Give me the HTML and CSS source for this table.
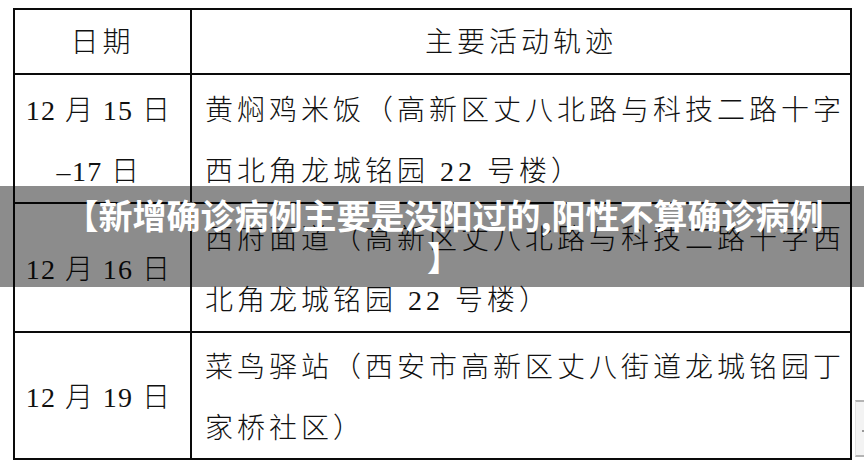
FILE: index.html
```html
<!DOCTYPE html>
<html lang="zh-CN">
<head>
<meta charset="utf-8">
<title>主要活动轨迹</title>
<link rel="stylesheet" href="styles.css">
</head>
<body>
<div class="page">
  <div class="grid">
    <div class="cell head">日期</div>
    <div class="cell head">主要活动轨迹</div>

    <div class="cell date two"><span>12 月 15 日</span><span>–17 日</span></div>
    <div class="cell place">黄焖鸡米饭（高新区丈八北路与科技二路十字西北角龙城铭园 22 号楼）</div>

    <div class="cell date">12 月 16 日</div>
    <div class="cell place">西府面道（高新区丈八北路与科技二路十字西北角龙城铭园 22 号楼）</div>

    <div class="cell date">12 月 19 日</div>
    <div class="cell place">菜鸟驿站（西安市高新区丈八街道龙城铭园丁家桥社区）</div>
  </div>
</div>
<div class="band">【新增确诊病例主要是没阳过的,阳性不算确诊病例<br>】</div>
<div class="side-tab"><span class="dot"></span></div>
</body>
</html>
```
FILE: styles.css
```css
html, body {
  margin: 0;
  padding: 0;
  background: #ffffff;
}
body {
  width: 864px;
  height: 470px;
  overflow: hidden;
  position: relative;
  font-family: "Liberation Serif", "Noto Sans CJK SC", serif;
  color: #111;
}
.page {
  padding: 8px 0 0 13px;
}
.grid {
  width: 839px;
  box-sizing: border-box;
  display: grid;
  grid-template-columns: 175px 658px;
  grid-template-rows: 63px 127px 127px 125px;
  gap: 2px;
  padding: 2px;
  background: #0a0a0a;
}
.cell {
  background: #fff;
  font-size: 28px;
  letter-spacing: 4px;
  line-height: 61px;
  font-weight: 300;
}
.head {
  display: flex;
  align-items: center;
  justify-content: center;
  padding-top: 2px;
}
.date {
  display: flex;
  flex-direction: column;
  align-items: center;
  justify-content: center;
  padding-right: 8px;
  padding-top: 4px;
  white-space: nowrap;
  letter-spacing: 1.4px;
}
.place {
  display: flex;
  align-items: center;
  padding: 4px 0 0 13px;
  box-sizing: border-box;
}
.band {
  position: absolute;
  left: 0;
  top: 186px;
  width: 864px;
  height: 101px;
  box-sizing: border-box;
  padding: 8px 24px 0 48px;
  background: rgba(0, 0, 0, 0.45);
  color: #fff;
  font-family: "Noto Sans CJK SC", sans-serif;
  font-weight: 700;
  font-size: 34px;
  line-height: 42px;
  text-align: center;
}
.side-tab {
  position: absolute;
  left: 855px;
  top: 400px;
  width: 14px;
  height: 57px;
  box-sizing: border-box;
  background: #f3f3f3;
  border-top: 2px solid #b4b4b4;
  border-bottom: 2px solid #b4b4b4;
  border-left: 1px solid #e2e2e2;
}
.dot {
  position: absolute;
  left: 6px;
  top: 28px;
  width: 2px;
  height: 2px;
  background: #999;
}
```
